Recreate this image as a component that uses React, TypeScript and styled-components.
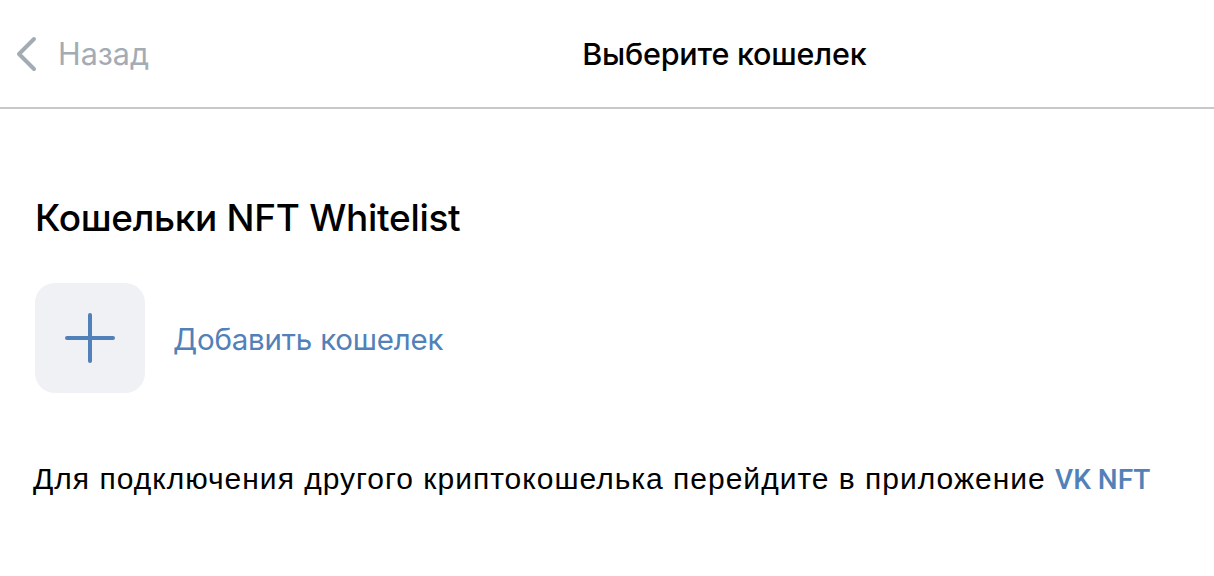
import React from "react";
import styled, { createGlobalStyle } from "styled-components";

const GlobalStyle = createGlobalStyle`
  html, body {
    margin: 0;
    padding: 0;
    background: #ffffff;
  }
  body {
    font-family: "Inter", "Liberation Sans", Arial, sans-serif;
    color: #000000;
    -webkit-font-smoothing: antialiased;
  }
`;

const Page = styled.div`
  width: 1214px;
  height: 576px;
  overflow: hidden;
  background: #ffffff;
`;

// Header
const Header = styled.header`
  height: 107px;
  display: flex;
  align-items: center;
  border-bottom: 2px solid #c8c8c8;
`;

const BackButton = styled.button`
  display: flex;
  align-items: center;
  gap: 20px;
  padding: 0 0 0 14px;
  border: none;
  background: none;
  font-family: "Inter", "Liberation Sans", sans-serif;
  font-size: 30.5px;
  color: #a3abb5;
  cursor: pointer;
`;

const Title = styled.h1`
  margin: 0 0 0 433px;
  font-size: 30.5px;
  font-weight: 500;
  letter-spacing: -0.2px;
`;

// Content
const Content = styled.main`
  padding: 87px 35px 0;
`;

const SectionTitle = styled.h2`
  margin: 0;
  font-size: 37px;
  font-weight: 500;
  line-height: 44px;
  letter-spacing: -0.3px;
`;

const AddRow = styled.div`
  display: flex;
  align-items: center;
  gap: 28px;
  margin-top: 43px;
  cursor: pointer;
`;

const AddTile = styled.div`
  width: 110px;
  height: 110px;
  border-radius: 20px;
  background: #f0f1f5;
  display: flex;
  align-items: center;
  justify-content: center;
`;

const AddLabel = styled.span`
  font-size: 29.5px;
  color: #5181b8;
  letter-spacing: -0.2px;
  margin-top: 2px;
`;

const Note = styled.p`
  margin: 69px 0 0 -2px;
  font-family: "Liberation Sans", Arial, sans-serif;
  font-size: 30px;
  line-height: 34px;
  letter-spacing: 1px;
  white-space: nowrap;
`;

const Link = styled.a`
  font-family: "Roboto", "Liberation Sans", sans-serif;
  font-size: 28px;
  color: #5181b8;
  font-weight: 500;
  letter-spacing: 0;
  text-decoration: none;
`;

function ChevronLeft() {
  return (
    <svg width="24" height="36" viewBox="0 0 24 36" fill="none">
      <path
        d="M20 3 L5 18 L20 33"
        stroke="#a3abb5"
        strokeWidth="4"
        strokeLinecap="round"
        strokeLinejoin="round"
      />
    </svg>
  );
}

function PlusIcon() {
  return (
    <svg width="50" height="50" viewBox="0 0 50 50" fill="none">
      <path
        d="M25 2 V48 M2 25 H48"
        stroke="#5181b8"
        strokeWidth="4"
        strokeLinecap="round"
      />
    </svg>
  );
}

export default function App() {
  return (
    <>
      <GlobalStyle />
      <Page>
        <Header>
          <BackButton>
            <ChevronLeft />
            Назад
          </BackButton>
          <Title>Выберите кошелек</Title>
        </Header>
        <Content>
          <SectionTitle>Кошельки NFT Whitelist</SectionTitle>
          <AddRow>
            <AddTile>
              <PlusIcon />
            </AddTile>
            <AddLabel>Добавить кошелек</AddLabel>
          </AddRow>
          <Note>
            Для подключения другого криптокошелька перейдите в приложение{" "}
            <Link href="#">VK NFT</Link>
          </Note>
        </Content>
      </Page>
    </>
  );
}
